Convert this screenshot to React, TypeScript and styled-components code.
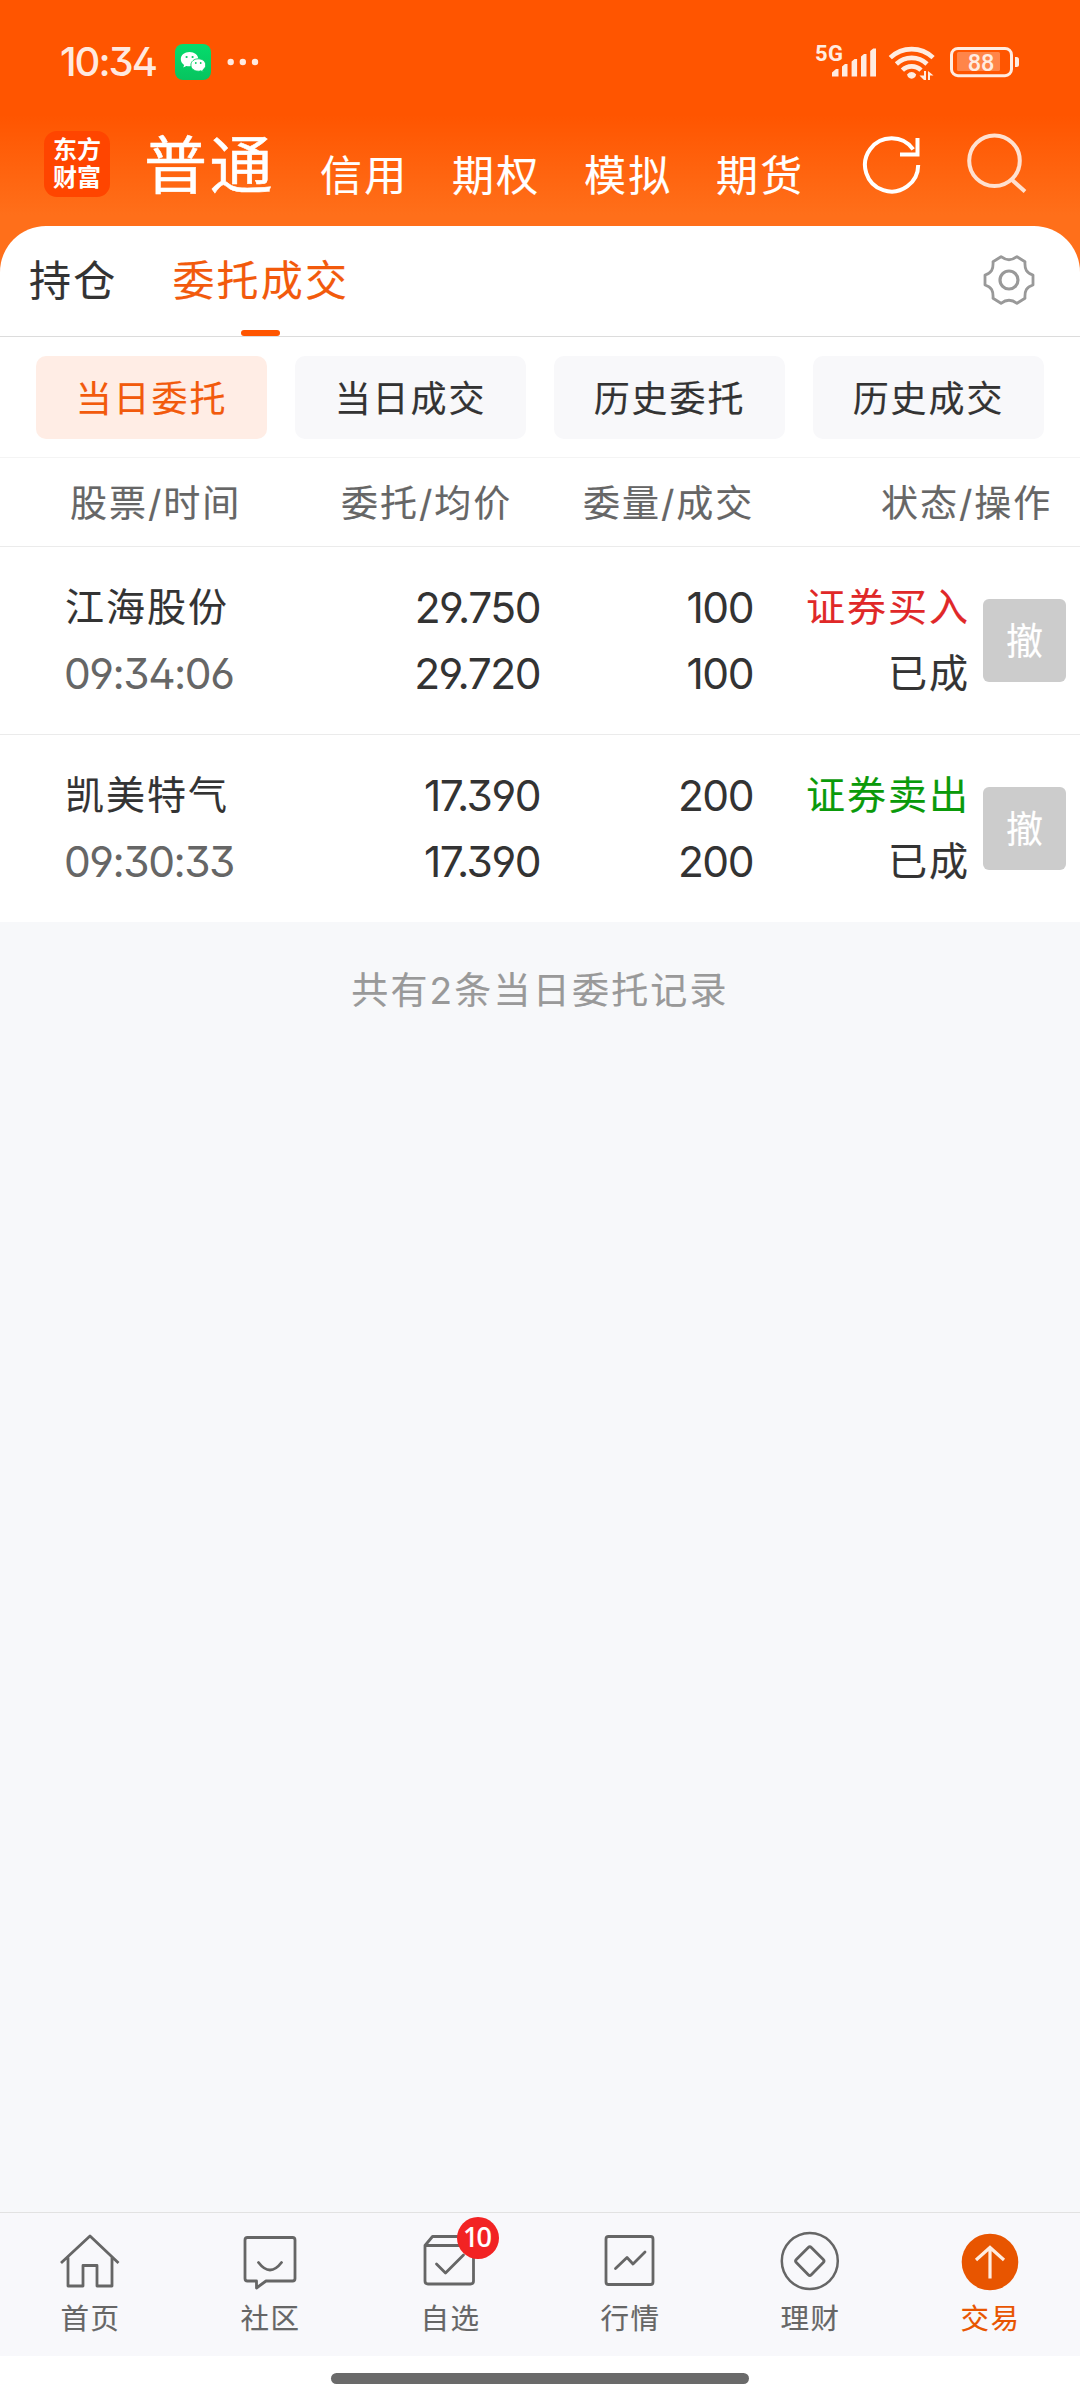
import React from "react";
import styled, { createGlobalStyle } from "styled-components";

const GlobalStyle = createGlobalStyle`
  * { box-sizing: border-box; }
  body {
    margin: 0;
    background: #f7f8fa;
    font-family: Inter, "Noto Sans CJK SC", sans-serif;
    font-feature-settings: "ss01", "cv09";
    -webkit-text-stroke-width: 0.15px;
    color: #333;
  }
  button { font: inherit; border: 0; padding: 0; background: none; color: inherit; }
`;

const Screen = styled.div`
  width: 1080px;
  height: 2400px;
  display: flex;
  flex-direction: column;
  overflow: hidden;
`;

const Top = styled.div`
  background: linear-gradient(#ff5500 0, #ff5500 115px, #ff6f1a 215px, #ff6f1a 100%);
`;

const StatusBar = styled.div`
  height: 124px;
  padding: 0 60px 0 60px;
  display: flex;
  justify-content: space-between;
  align-items: center;
`;

const StatusSide = styled.div`
  display: flex;
  align-items: center;
  height: 60px;
`;

const Clock = styled.span`
  width: 115px;
  font-size: 40px;
  line-height: 40px;
  font-weight: 500;
  letter-spacing: -2px;
  -webkit-text-stroke-width: 0;
  color: rgba(255, 255, 255, 0.88);
`;

const Header = styled.header`
  height: 102px;
  padding-left: 44px;
  display: flex;
`;

const Logo = styled.div`
  width: 66px;
  height: 66px;
  margin-top: 7px;
  padding-top: 5px;
  border-radius: 13px;
  background: #ff4500;
  color: #fff;
  font-size: 24px;
  line-height: 28px;
  font-weight: 700;
  text-align: center;
  -webkit-text-stroke-width: 0;
`;

const Accounts = styled.nav`
  display: flex;
  margin-left: 34px;
  color: #fff;
`;

const MainAccount = styled.span`
  width: 176px;
  margin-top: 5px;
  font-size: 63px;
  line-height: 72px;
  letter-spacing: 2.4px;
  -webkit-text-stroke-width: 0.5px;
`;

const Account = styled.span`
  width: 132px;
  margin-top: 22px;
  font-size: 42px;
  line-height: 60px;
  letter-spacing: 2.2px;
`;

const HeaderIcons = styled.div`
  display: flex;
  gap: 42px;
  margin: 8px 0 0 14px;
`;

const Panel = styled.section`
  background: #fff;
  border-radius: 46px 46px 0 0;
`;

const Tabs = styled.div`
  height: 111px;
  padding: 0 41px 0 29px;
  border-bottom: 1px solid #dcdcdc;
  display: flex;
`;

const Tab = styled.div<{ $active?: boolean }>`
  display: flex;
  flex-direction: column;
  align-items: center;
  justify-content: space-between;
  margin-right: 55px;
  padding-top: 25px;
  font-size: 42px;
  line-height: 60px;
  letter-spacing: 2.2px;
  color: ${(p) => (p.$active ? "#f25a0c" : "#333")};
  &::after {
    content: "";
    width: 39px;
    height: 6px;
    border-radius: 3px;
    background: ${(p) => (p.$active ? "#ff5500" : "transparent")};
  }
`;

const Settings = styled.button`
  height: 60px;
  margin: 24px 0 0 auto;
`;

const Chips = styled.div`
  display: grid;
  grid-template-columns: repeat(4, 231px);
  gap: 28px;
  padding: 19px 36px 18px;
  border-bottom: 1px solid #f4f4f4;
`;

const Chip = styled.button<{ $active?: boolean }>`
  height: 83px;
  padding-bottom: 4px;
  border-radius: 10px;
  font-size: 36px;
  letter-spacing: 1.9px;
  background: ${(p) => (p.$active ? "#ffede5" : "#f8f8fa")};
  color: ${(p) => (p.$active ? "#f25a0c" : "#333")};
`;

const TableHead = styled.div`
  height: 89px;
  padding-bottom: 3px;
  display: grid;
  grid-template-columns: 70px 271px 242px 298px 1fr;
  align-items: center;
  border-bottom: 1px solid #ebebeb;
  font-size: 37px;
  letter-spacing: 2px;
  color: #666;
`;

const Row = styled.div`
  height: 187px;
  display: grid;
  grid-template-columns: 350px 190px 213px 216px 1fr;
  background: #fff;
  & + & {
    height: 188px;
    border-top: 1px solid #ebebeb;
  }
`;

const Cell = styled.div<{ $right?: boolean }>`
  display: flex;
  flex-direction: column;
  padding-top: 27px;
  padding-left: ${(p) => (p.$right ? 0 : 65)}px;
  align-items: ${(p) => (p.$right ? "flex-end" : "flex-start")};
`;

const Cjk = styled.span<{ $color?: string }>`
  height: 66px;
  line-height: 66px;
  font-size: 39px;
  letter-spacing: 2px;
  margin-right: -1px;
  color: ${(p) => p.$color ?? "#333"};
`;

const Digits = styled.span<{ $muted?: boolean }>`
  height: 66px;
  line-height: 68px;
  font-size: 42.5px;
  letter-spacing: -1.5px;
  margin-left: ${(p) => (p.$muted ? -1 : 0)}px;
  -webkit-text-stroke-width: 0;
  color: ${(p) => (p.$muted ? "#666" : "#333")};
`;

const Cancel = styled.button`
  width: 83px;
  height: 83px;
  margin: 52px 0 0 14px;
  padding-bottom: 4px;
  border-radius: 6px;
  background: #ccc;
  color: #fff;
  font-size: 37px;
`;

const Summary = styled.main`
  flex: 1;
  padding-top: 42px;
  background: #f7f8fa;
  color: #999;
  font-size: 37px;
  line-height: 54px;
  letter-spacing: 2.2px;
  text-align: center;
`;

const BottomNav = styled.nav`
  height: 144px;
  border-top: 1px solid #e2e2e2;
  background: #f8f8fb;
  display: grid;
  grid-template-columns: repeat(6, 180px);
`;

const NavItem = styled.div<{ $active?: boolean }>`
  position: relative;
  display: flex;
  flex-direction: column;
  align-items: center;
  padding-top: 18px;
  font-size: 28.5px;
  line-height: 40px;
  letter-spacing: 1.5px;
  color: ${(p) => (p.$active ? "#e85500" : "#666")};
  svg { margin-bottom: 8px; }
`;

const NavLabel = styled.span`
  padding-left: 1px;
`;

const Badge = styled.span`
  position: absolute;
  top: 4px;
  left: 97px;
  width: 42px;
  height: 42px;
  border-radius: 50%;
  background: #f22323;
  color: #fff;
  font-family: "Noto Sans", sans-serif;
  font-size: 27px;
  line-height: 40px;
  font-weight: 500;
  letter-spacing: -2px;
  text-indent: -3px;
  text-align: center;
`;

const HomeArea = styled.div`
  height: 44px;
  padding-top: 17px;
  background: #fff;
`;

const HomeBar = styled.div`
  width: 418px;
  height: 11px;
  margin: 0 auto;
  border-radius: 6px;
  background: #6a6a6a;
`;

const WeChat = () => (
  <svg width="36" height="36" viewBox="0 0 36 36">
    <defs>
      <linearGradient id="wx" x1="0" y1="0" x2="0" y2="1">
        <stop offset="0" stopColor="#05dc6c" />
        <stop offset="1" stopColor="#07c45f" />
      </linearGradient>
    </defs>
    <rect width="36" height="36" rx="8" fill="url(#wx)" />
    <path d="M14.500 8C9.600 8 5.800 11.100 5.800 15.200c0 2.400 1.300 4.300 3.300 5.700l-.8 2.500 3-1.500c1.100.3 2.100.4 3.300.4 4.900 0 8.700-3.200 8.700-7.200S19.400 8 14.500 8z" fill="#fff" />
    <path d="M23.300 14.800c-4.200 0-7.400 2.700-7.400 6.200s3.200 6.200 7.400 6.200c.9 0 1.800-.1 2.600-.4l2.400 1.300-.6-2.100c1.800-1.200 3-2.900 3-5 0-3.500-3.200-6.200-7.400-6.200z" fill="#fff" stroke="#07cc63" strokeWidth="0.900" />
    <g fill="#07cc63"><circle cx="11.600" cy="13" r="1.100" /><circle cx="17.600" cy="13" r="1.100" /><circle cx="20.800" cy="19" r="0.900" /><circle cx="25.700" cy="19" r="0.900" /></g>
  </svg>
);

const Dots = () => (
  <svg width="50" height="36" viewBox="0 0 50 36" fill="rgba(255,255,255,.88)">
    <circle cx="19.700" cy="18" r="3.200" /><circle cx="31.800" cy="18" r="3.200" /><circle cx="44" cy="18" r="3.200" />
  </svg>
);

const NetText = styled.text`
  font-family: Roboto, sans-serif;
  font-size: 22px;
  font-weight: 700;
  letter-spacing: 0.5px;
  -webkit-text-stroke-width: 0;
`;

const BatteryText = styled.text`
  font-family: Roboto, sans-serif;
  font-size: 23.5px;
  font-weight: 500;
  -webkit-text-stroke-width: 0;
`;

const StatusIcons = () => (
  <svg width="206" height="60" viewBox="814 32 206 60" fill="#ffece1">
    <NetText x="815" y="60.500">5G</NetText>
    <path d="M832 76.500V72.500l4-3.500h2.500v7.500zM842 76.500V66.500l3-2.500h2.500v12.500zM851.600 76.500V61.500l3-2.500h2.500v17.500zM861 76.500V56.500l3-2.500h2.500v22.500zM870.200 76.500V51l3-2.500h2.800v28z" />
    <g fill="none" stroke="#ffece1" strokeWidth="4.600">
      <path d="M890.300 57.700a31 31 0 0 1 42.800 0" />
      <path d="M896.400 64a22.200 22.200 0 0 1 30.600 0" />
      <path d="M902.400 70.200a13.200 13.200 0 0 1 18.600 0" />
    </g>
    <path d="M907 74.500q4.600-4.800 9.200 0l-1 2.500q-3.600 3.600-7.200 0z" />
    <path d="M924 71h2v9h-2l-4.500-4.500H924zM928 80V71l5.500 4.500H930V80z" />
    <rect x="951.500" y="48.400" width="60" height="27.300" rx="6.500" fill="none" stroke="#ffece1" strokeWidth="3" />
    <rect x="957" y="52" width="43" height="19" rx="1.500" fill="#ff8549" />
    <path d="M1015 57h1.500q2.500 0 2.500 2.500v5q0 2.500-2.500 2.500h-1.500z" />
    <BatteryText x="981" y="71" textAnchor="middle">88</BatteryText>
  </svg>
);

const Refresh = () => (
  <svg width="62" height="64" viewBox="862 132 62 64" fill="none" stroke="#fff" strokeWidth="4">
    <path d="M918.200 165a26.600 26.600 0 1 1-5-15.600" />
    <path d="M917.500 138v16.500H900" />
  </svg>
);

const Search = () => (
  <svg width="62" height="64" viewBox="966 132 62 64" fill="none" stroke="#ffe0cf" strokeWidth="4">
    <circle cx="994.500" cy="160.700" r="25.300" />
    <path d="M1011.500 179.500l13.500 12" />
  </svg>
);

const Gear = () => (
  <svg width="60" height="60" viewBox="-30 -30 60 60" fill="none" stroke="#999" strokeWidth="2.800" strokeLinejoin="round">
    <path d="M-8-23.300Q0-17.300 8-23.300L16-18.300C15.500-10.500 17.500-7 24-5V5C17.500 7 15.500 10.500 16 18.300L8 23.300Q0 17.300-8 23.300L-16 18.300C-15.500 10.500-17.500 7-24 5V-5C-17.500-7-15.500-10.500-16-18.300Z" />
    <circle r="9" strokeWidth="3.200" />
  </svg>
);

const NavSvg = ({ children }: { children: React.ReactNode }) => (
  <svg width="60" height="60" viewBox="0 0 60 60" fill="none" stroke="#666" strokeWidth="2.800" strokeLinejoin="round" strokeLinecap="round">
    {children}
  </svg>
);

const navItems = [
  {
    label: "首页",
    icon: <NavSvg><path d="M1 32L30 5l28.500 27M8 26.500V55h15V34.500h14V55h15V26.500" strokeLinecap="butt" /></NavSvg>,
  },
  {
    label: "社区",
    icon: <NavSvg><path d="M7.500 6.500h45q2.500 0 2.500 2.500V47.500q0 2.500-2.500 2.500H26l-9.500 7V50H7.500Q5 50 5 47.500V9Q5 6.500 7.500 6.500zM18.500 31.500q11.500 15 23 0" /></NavSvg>,
  },
  {
    label: "自选",
    badge: "10",
    icon: <NavSvg><path d="M5 14.500h48.500V50q0 3-3 3H8q-3 0-3-3zL12.500 5.500H46l7.500 9M16.500 33l9 9 18-18" /></NavSvg>,
  },
  {
    label: "行情",
    icon: <NavSvg><rect x="6" y="5.500" width="47" height="48" rx="2.500" /><path d="M15.500 37.500L27 26.500l6 6.500L45 21" /></NavSvg>,
  },
  {
    label: "理财",
    icon: <NavSvg><circle cx="29.800" cy="30" r="28" strokeWidth="2.500" /><path d="M28.300 16.500q1.500-1.500 3 0L43.300 28.500q1.500 1.500 0 3L31.300 43.800q-1.500 1.500-3 0L16.300 31.500q-1.500-1.500 0-3z" /></NavSvg>,
  },
  {
    label: "交易",
    active: true,
    icon: (
      <svg width="60" height="60" viewBox="0 0 60 60" fill="none">
        <circle cx="30" cy="31" r="28.300" fill="#e85500" />
        <path d="M30 47.500V17M16 29L30 16.500 44 29" stroke="#ffece0" strokeWidth="3.200" />
      </svg>
    ),
  },
];

const orders = [
  { name: "江海股份", time: "09:34:06", price: "29.750", avg: "29.720", qty: "100", done: "100", side: "证券买入", color: "#e02828" },
  { name: "凯美特气", time: "09:30:33", price: "17.390", avg: "17.390", qty: "200", done: "200", side: "证券卖出", color: "#0a9a0a" },
];

export default function App() {
  return (
    <Screen>
      <GlobalStyle />
      <Top>
        <StatusBar>
          <StatusSide><Clock>10:34</Clock><WeChat /><Dots /></StatusSide>
          <StatusSide><StatusIcons /></StatusSide>
        </StatusBar>
        <Header>
          <Logo>东方<br />财富</Logo>
          <Accounts>
            <MainAccount>普通</MainAccount>
            {["信用", "期权", "模拟", "期货"].map((a) => <Account key={a}>{a}</Account>)}
          </Accounts>
          <HeaderIcons><Refresh /><Search /></HeaderIcons>
        </Header>
        <Panel>
          <Tabs>
            <Tab>持仓</Tab>
            <Tab $active>委托成交</Tab>
            <Settings aria-label="设置"><Gear /></Settings>
          </Tabs>
          <Chips>
            <Chip $active>当日委托</Chip>
            <Chip>当日成交</Chip>
            <Chip>历史委托</Chip>
            <Chip>历史成交</Chip>
          </Chips>
          <TableHead>
            <span />
            <span>股票/时间</span>
            <span>委托/均价</span>
            <span>委量/成交</span>
            <span>状态/操作</span>
          </TableHead>
        </Panel>
      </Top>
      <div>
        {orders.map((o) => (
          <Row key={o.name}>
            <Cell><Cjk>{o.name}</Cjk><Digits $muted>{o.time}</Digits></Cell>
            <Cell $right><Digits>{o.price}</Digits><Digits>{o.avg}</Digits></Cell>
            <Cell $right><Digits>{o.qty}</Digits><Digits>{o.done}</Digits></Cell>
            <Cell $right><Cjk $color={o.color}>{o.side}</Cjk><Cjk>已成</Cjk></Cell>
            <Cancel>撤</Cancel>
          </Row>
        ))}
      </div>
      <Summary>共有2条当日委托记录</Summary>
      <BottomNav>
        {navItems.map((n) => (
          <NavItem key={n.label} $active={n.active}>
            {n.icon}
            <NavLabel>{n.label}</NavLabel>
            {n.badge && <Badge>{n.badge}</Badge>}
          </NavItem>
        ))}
      </BottomNav>
      <HomeArea><HomeBar /></HomeArea>
    </Screen>
  );
}
